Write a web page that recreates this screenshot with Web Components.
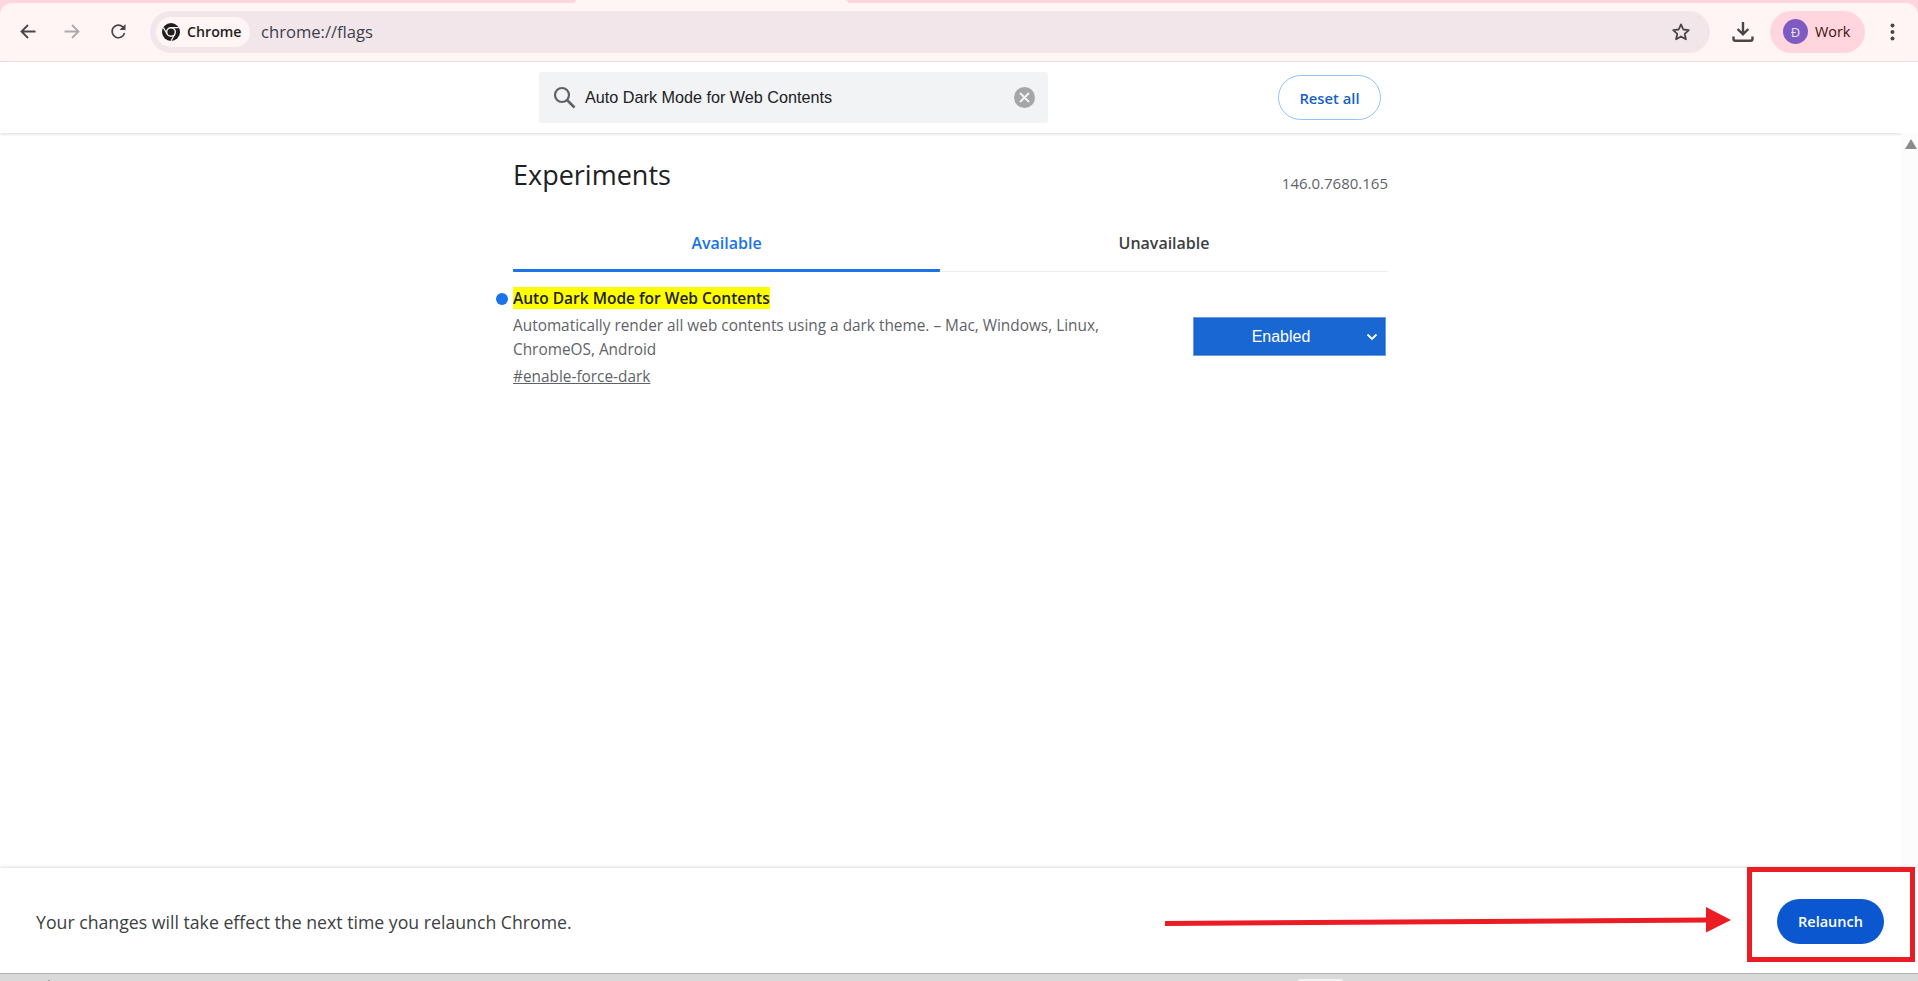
<!DOCTYPE html>
<html lang="en">
<head>
<meta charset="utf-8">
<title>Experiments</title>
<style>
  html, body { margin: 0; height: 100%; overflow: hidden; background: #fff; }
  body { font-family: "Open Sans", "Noto Sans", sans-serif; }
  flags-app { height: 981px; }
</style>
</head>
<body>
<flags-app>
  <chrome-toolbar slot="toolbar" url="chrome://flags" chip="Chrome"></chrome-toolbar>
  <flags-search slot="search" value="Auto Dark Mode for Web Contents"></flags-search>
  <flags-content slot="content" version="146.0.7680.165">
    <flag-row name="Auto Dark Mode for Web Contents" anchor="#enable-force-dark" state="Enabled">
      Automatically render all web contents using a dark theme. – Mac, Windows, Linux, ChromeOS, Android
    </flag-row>
  </flags-content>
  <relaunch-bar slot="relaunch"></relaunch-bar>
</flags-app>

<script>
class FlagsApp extends HTMLElement {
    constructor() {
        super();
        this.attachShadow({mode: 'open'});
        this.shadowRoot.innerHTML = `
        <style>
            :host { display: flex; flex-direction: column; width: 1918px; background: #fff; }
            #chrome { background: #ffd6de; flex: none; padding-top: 3px; position: relative; }
            /* active tab bleeding into the top band */
            #tab { position: absolute; left: 575px; top: 0; width: 273px; height: 3px; background: #fff5f5; border-radius: 4px 4px 0 0; }
            #main { flex: 1; min-height: 0; position: relative; z-index: 3; overflow: hidden; }
            #strip { height: 8px; flex: none; background: #d9d9d9; border-top: 1px solid #b4b4b4; box-sizing: border-box; position: relative; }
            #thumb { position: absolute; left: 1298px; bottom: 0; width: 45px; height: 2px; background: #f2f2f2; border-radius: 2px 2px 0 0; }
            #tick { position: absolute; left: 48px; bottom: 0; width: 2px; height: 1px; background: #999; }
        </style>
        <div id="chrome"><div id="tab"></div><slot name="toolbar"></slot></div>
        <slot name="search"></slot>
        <div id="main"><slot name="content"></slot></div>
        <slot name="relaunch"></slot>
        <div id="strip"><div id="tick"></div><div id="thumb"></div></div>`;
    }
}
customElements.define('flags-app', FlagsApp);

class ChromeToolbar extends HTMLElement {
    constructor() {
        super();
        this.attachShadow({mode: 'open'});
    }
    connectedCallback() {
        this.shadowRoot.innerHTML = `
        <style>
            :host { display: flex; align-items: center; height: 59px; box-sizing: border-box; background: #fff5f5;
                border-bottom: 1px solid #f3e0e4; border-radius: 12px 12px 0 0; padding: 0 18px 1px 0; }
            svg { display: block; }
            .nav { width: 44px; height: 36px; display: flex; align-items: center; justify-content: center; flex: none; }
            .nav.reload { margin-left: 2px; }
            #navs { display: flex; margin-left: 6px; width: 144px; flex: none; }
            #omni { flex: 1; height: 42px; border-radius: 21px; background: #f3e6ea; display: flex; align-items: center; padding: 0 6px; margin-right: 13px; }
            #chip { height: 30px; width: 94px; box-sizing: border-box; border-radius: 15px; background: #fff5f5; display: flex; align-items: center; padding-left: 6px; gap: 7px;
                font: 600 14.2px "Open Sans", sans-serif; color: #1f1f1f; flex: none; }
            #url { margin-left: 11px; font: 400 16.6px "Open Sans", sans-serif; color: #3c3f4a; flex: 1; }
            #star { margin-right: 13px; }
            #dl { width: 40px; display: flex; justify-content: center; margin-right: 7px; flex: none; }
            #work { width: 95px; height: 42px; border-radius: 21px; background: #ffd6de; display: flex; align-items: center; box-sizing: border-box; padding-left: 13px; gap: 7px;
                font: 400 14.4px "Open Sans", sans-serif; color: #410e0b; flex: none; margin-right: 19px; }
            #avatar { width: 25px; height: 25px; border-radius: 50%; background: #7e5bc2; color: #e8e0f6; font: 400 13px "Open Sans", sans-serif; display: flex; align-items: center; justify-content: center; }
            #menu { width: 16px; display: flex; justify-content: center; flex: none; }
        </style>
        <div id="navs">
            <div class="nav"><svg width="16" height="15" viewBox="0 0 16 15"><path d="M15.500 7.500H2M8 1L1.500 7.500 8 14" fill="none" stroke="#4a4548" stroke-width="1.800"/></svg></div>
            <div class="nav"><svg width="16" height="15" viewBox="0 0 16 15"><path d="M.5 7.500H14M8 1l6.500 6.500L8 14" fill="none" stroke="#aeaaac" stroke-width="1.800"/></svg></div>
            <div class="nav reload"><svg width="17" height="17" viewBox="0 0 18 18"><path d="M15.400 10.500A6.700 6.700 0 1 1 13.600 4.100L15.600 6" fill="none" stroke="#4a4548" stroke-width="1.800"/><path d="M16.400 1v6.400H10z" fill="#4a4548"/></svg></div>
        </div>
        <div id="omni">
            <div id="chip">
                <svg width="18" height="18" viewBox="0 0 18 18">
                    <circle cx="9" cy="9" r="9" fill="#1f1f1f"/>
                    <path d="M9 4.600h7.600M5.200 11.200L1.400 4.600M12.800 11.200L9 17.800" stroke="#fff5f5" stroke-width="1.200" fill="none"/>
                    <circle cx="9" cy="9" r="4.300" fill="#1f1f1f" stroke="#fff5f5" stroke-width="1.400"/>
                </svg>
                <span>${this.getAttribute('chip')}</span>
            </div>
            <div id="url">${this.getAttribute('url')}</div>
            <svg id="star" width="20" height="20" viewBox="0 0 20 20"><path d="M10 2.400l2.300 5.100 5.500.6-4.100 3.700 1.200 5.500L10 14.500l-4.900 2.800 1.200-5.500-4.100-3.700 5.500-.6z" fill="none" stroke="#4a4548" stroke-width="1.800" stroke-linejoin="round"/></svg>
        </div>
        <div id="dl"><svg width="22" height="22" viewBox="0 0 22 22"><path d="M11 1v12M5.600 8L11 13.400 16.400 8" fill="none" stroke="#4a4548" stroke-width="2.400"/><path d="M1.500 15.500v2.200c0 1.200.8 2 2 2h15c1.200 0 2-.8 2-2v-2.200" fill="none" stroke="#4a4548" stroke-width="2.400"/></svg></div>
        <div id="work"><div id="avatar">Đ</div><span>Work</span></div>
        <div id="menu"><svg width="5" height="18" viewBox="0 0 5 18"><circle cx="2.500" cy="2.500" r="2" fill="#4a4548"/><circle cx="2.500" cy="9" r="2" fill="#4a4548"/><circle cx="2.500" cy="15.500" r="2" fill="#4a4548"/></svg></div>`;
    }
}
customElements.define('chrome-toolbar', ChromeToolbar);

class FlagsSearch extends HTMLElement {
    constructor() {
        super();
        this.attachShadow({mode: 'open'});
    }
    connectedCallback() {
        this.shadowRoot.innerHTML = `
        <style>
            :host { display: block; height: 71px; box-sizing: border-box; background: #fff; flex: none; position: relative; z-index: 2;
                box-shadow: 0 1px 3px rgba(60,64,67,.2); padding: 10px 0 0 539px; }
            #row { display: flex; align-items: flex-start; }
            #box { width: 509px; height: 51px; background: #f1f3f4; border-radius: 3px; display: flex; align-items: center; box-sizing: border-box; padding: 0 13px 0 14px; }
            #text { margin-left: 9px; flex: 1; font: 400 16.2px "Liberation Sans", Arial, sans-serif; color: #202124; }
            #reset { margin: 3px 0 0 230px; width: 103px; height: 45px; box-sizing: border-box; border: 1px solid #92c4f5; border-radius: 23px; background: #fff; padding-top: 1px;
                display: flex; align-items: center; justify-content: center; font: 600 14.8px "Open Sans", sans-serif; color: #1a5fc8; }
        </style>
        <div id="row">
            <div id="box">
                <svg width="23" height="23" viewBox="0 0 23 23"><circle cx="9" cy="9" r="7" fill="none" stroke="#5f6368" stroke-width="2.200"/><path d="M14 14l7.500 7.500" stroke="#5f6368" stroke-width="2.600"/></svg>
                <div id="text">${this.getAttribute('value')}</div>
                <svg width="21" height="21" viewBox="0 0 21 21"><circle cx="10.500" cy="10.500" r="10.500" fill="#a6a6a6"/><path d="M6 6l9 9M15 6l-9 9" stroke="#f1f3f4" stroke-width="2"/></svg>
            </div>
            <div id="reset">Reset all</div>
        </div>`;
    }
}
customElements.define('flags-search', FlagsSearch);

class FlagsContent extends HTMLElement {
    constructor() {
        super();
        this.attachShadow({mode: 'open'});
    }
    connectedCallback() {
        this.shadowRoot.innerHTML = `
        <style>
            :host { display: block; height: 100%; position: relative; padding-left: 513px; box-sizing: border-box; }
            #wrap { width: 875px; }
            #head { display: flex; justify-content: space-between; align-items: flex-start; padding-top: 23px; height: 67px; }
            h1 { margin: 0; font: 400 27px/38px "Open Sans", sans-serif; color: #202124; }
            #ver { font: 400 15px/20px "Open Sans", sans-serif; color: #5f6368; margin-top: 17px; }
            #tabs { display: grid; grid-template-columns: 427px 1fr; height: 48px; border-bottom: 1px solid #eceded; }
            .tab { display: flex; align-items: center; justify-content: center; box-sizing: border-box; font: 600 16px "Open Sans", sans-serif; color: #3c4043; padding-bottom: 10px; }
            .tab.on { color: #1a73e8; border-bottom: 3px solid #1a73e8; padding-bottom: 6px; height: 49px; border-radius: 0 0 1px 1px; }
            #scroll { position: absolute; top: 0; right: 0; width: 17px; height: 100%; background: #fcfcfc; }
            #arrow { width: 0; height: 0; border-left: 6px solid transparent; border-right: 6px solid transparent; border-bottom: 10px solid #8c8a8c; margin: 6px 0 0 4px; }
        </style>
        <div id="wrap">
            <div id="head"><h1>Experiments</h1><div id="ver">${this.getAttribute('version')}</div></div>
            <div id="tabs"><div class="tab on">Available</div><div class="tab">Unavailable</div></div>
            <slot></slot>
        </div>
        <div id="scroll"><div id="arrow"></div></div>`;
    }
}
customElements.define('flags-content', FlagsContent);

class FlagRow extends HTMLElement {
    constructor() {
        super();
        this.attachShadow({mode: 'open'});
    }
    connectedCallback() {
        this.shadowRoot.innerHTML = `
        <style>
            :host { display: flex; justify-content: space-between; padding: 15px 2px 0 0; position: relative; }
            #info { width: 600px; }
            #name { position: relative; font: 600 15.5px/23px "Open Sans", sans-serif; color: #202124; height: 22px; }
            #name mark { background: #ff0; color: inherit; display: inline-block; height: 22px; }
            #dot { position: absolute; left: -17px; top: 6px; width: 12px; height: 12px; border-radius: 50%; background: #1a73e8; }
            #desc { font: 400 15.38px/24px "Open Sans", sans-serif; color: #5f6368; margin-top: 5px; }
            #anchor { display: inline-block; font: 400 15.38px/24px "Open Sans", sans-serif; color: #5f6368; text-decoration: underline; margin-top: 3px; }
            #select { margin-top: 30px; width: 193px; height: 39px; background: #1967d2; border: 1px solid #6ba0e6; box-shadow: inset 0 0 0 1px #1a5fc8; box-sizing: border-box;
                display: flex; align-items: center; position: relative; justify-content: center; padding-right: 17px; font: 400 16px "Liberation Sans", Arial, sans-serif; color: #fff; }
            #select svg { position: absolute; right: 7px; top: 15px; }
        </style>
        <div id="info">
            <div id="name"><span id="dot"></span><mark>${this.getAttribute('name')}</mark></div>
            <div id="desc"><slot></slot></div>
            <span id="anchor">${this.getAttribute('anchor')}</span>
        </div>
        <div id="select">${this.getAttribute('state')}<svg width="12" height="8" viewBox="0 0 12 8"><path d="M1.500 1.500L6 6l4.500-4.500" fill="none" stroke="#fff" stroke-width="1.800"/></svg></div>`;
    }
}
customElements.define('flag-row', FlagRow);

class RelaunchBar extends HTMLElement {
    constructor() {
        super();
        this.attachShadow({mode: 'open'});
        this.shadowRoot.innerHTML = `
        <style>
            :host { display: flex; flex: none; align-items: center; justify-content: space-between; height: 105px; box-sizing: border-box; background: #fff; position: relative; z-index: 4;
                box-shadow: 0 -1px 3px rgba(60,64,67,.18); padding: 2px 34px 0 36px; }
            #msg { font: 400 17.7px "Open Sans", sans-serif; color: #3c4043; }
            #btn { width: 107px; height: 45px; border-radius: 23px; background: #0b57d0; color: #fff; font: 600 14.5px "Open Sans", sans-serif; display: flex; align-items: center; justify-content: center; }
            /* annotation drawn over the bar */
            #mark { position: absolute; left: 0; top: 0; pointer-events: none; overflow: visible; }
        </style>
        <div id="msg">Your changes will take effect the next time you relaunch Chrome.</div>
        <div id="btn">Relaunch</div>
        <svg id="mark" width="1918" height="105" viewBox="0 0 1918 105">
            <rect x="1749.500" y="1.500" width="163" height="90" fill="none" stroke="#ec1c24" stroke-width="5"/>
            <path d="M1165 55.500L1708 52" stroke="#ec1c24" stroke-width="5"/>
            <path d="M1706 39V64.500L1731 52z" fill="#ec1c24"/>
        </svg>`;
    }
}
customElements.define('relaunch-bar', RelaunchBar);
</script>
</body>
</html>
